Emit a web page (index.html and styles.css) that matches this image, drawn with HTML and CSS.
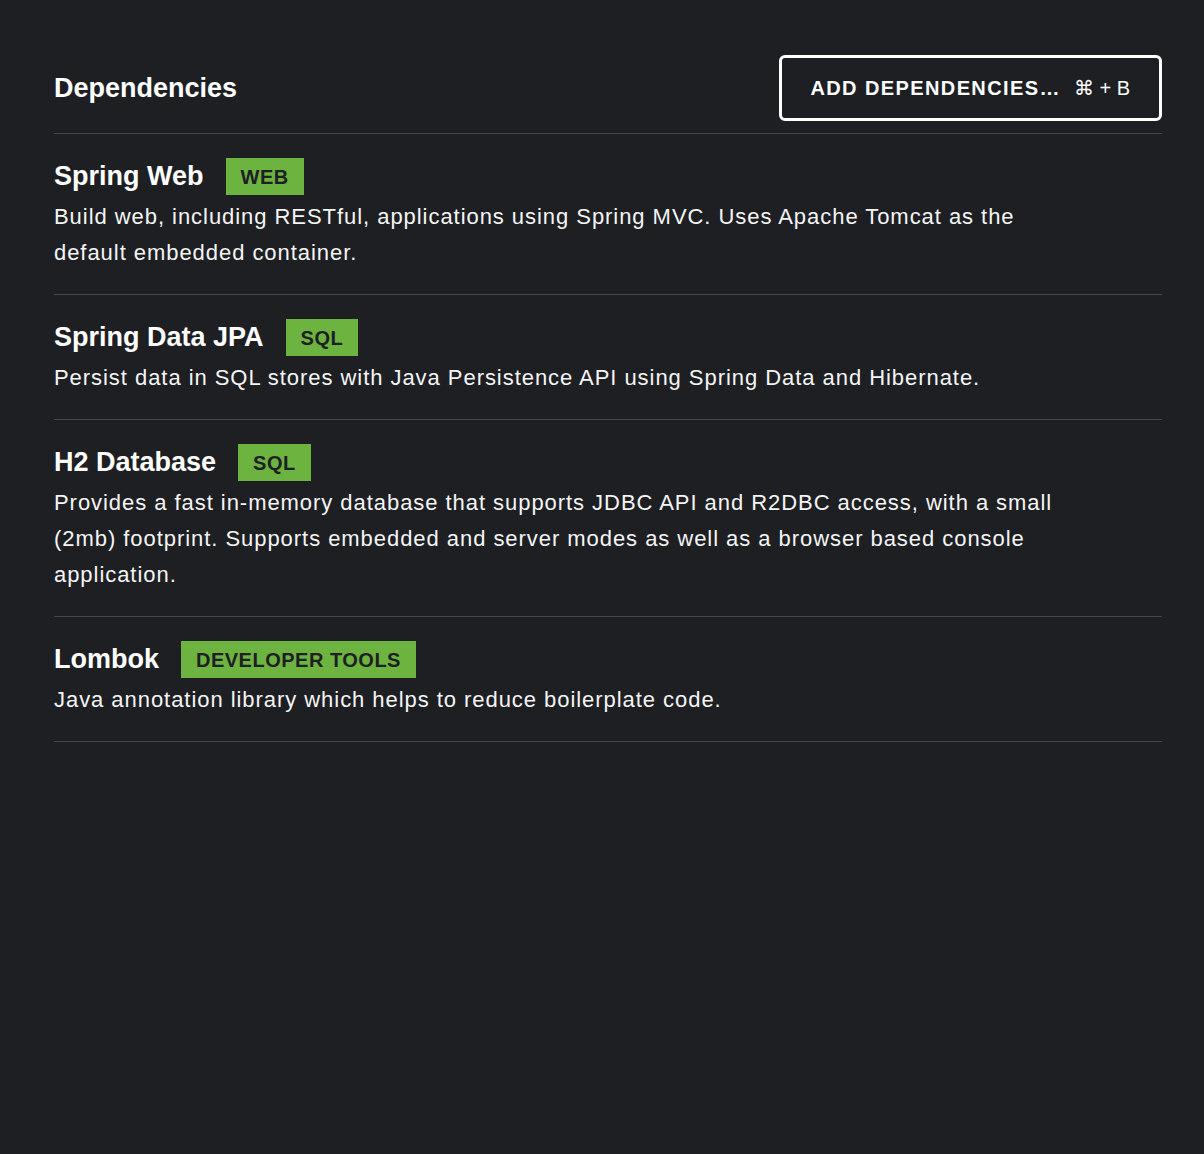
FILE: index.html
```html
<!DOCTYPE html>
<html lang="en">
<head>
    <meta charset="UTF-8">
    <meta name="viewport" content="width=device-width, initial-scale=1.0">
    <title>Dependencies</title>
    <link rel="stylesheet" href="styles.css">
</head>
<body>
    <div class="deps">
        <div class="deps-header">
            <h2 class="deps-title">Dependencies</h2>
            <button class="add-btn">ADD DEPENDENCIES&hellip; <span class="shortcut">&#8984; + B</span></button>
        </div>

        <div class="dep">
            <div class="dep-head">
                <span class="dep-name">Spring Web</span>
                <span class="tag">WEB</span>
            </div>
            <p class="dep-desc">Build web, including RESTful, applications using Spring MVC. Uses Apache Tomcat as the default embedded container.</p>
        </div>

        <div class="dep">
            <div class="dep-head">
                <span class="dep-name">Spring Data JPA</span>
                <span class="tag">SQL</span>
            </div>
            <p class="dep-desc">Persist data in SQL stores with Java Persistence API using Spring Data and Hibernate.</p>
        </div>

        <div class="dep">
            <div class="dep-head">
                <span class="dep-name">H2 Database</span>
                <span class="tag">SQL</span>
            </div>
            <p class="dep-desc">Provides a fast in-memory database that supports JDBC API and R2DBC access, with a small (2mb) footprint. Supports embedded and server modes as well as a browser based console application.</p>
        </div>

        <div class="dep">
            <div class="dep-head">
                <span class="dep-name">Lombok</span>
                <span class="tag">DEVELOPER TOOLS</span>
            </div>
            <p class="dep-desc">Java annotation library which helps to reduce boilerplate code.</p>
        </div>
    </div>
</body>
</html>
```

FILE: styles.css
```css
body {
    margin: 0;
    background-color: #1d1f23;
    color: #f5f5f5;
    font-family: "Liberation Sans", Arial, Helvetica, sans-serif;
    min-height: 100vh;
}
.deps {
    padding: 55px 42px 0 54px;
}
.deps-header {
    display: flex;
    justify-content: space-between;
    align-items: center;
    padding-bottom: 12px;
    border-bottom: 1px solid #46484c;
}
.deps-title {
    margin: 0;
    font-size: 27px;
    font-weight: bold;
    color: #fff;
}
.add-btn {
    height: 66px;
    padding: 0 29px 0 28px;
    border: 3px solid #fff;
    border-radius: 6px;
    background: transparent;
    color: #fff;
    font-family: inherit;
    font-size: 20px;
    font-weight: bold;
    letter-spacing: 1.4px;
    cursor: pointer;
}
.shortcut {
    font-weight: normal;
    letter-spacing: 0;
    margin-left: 6px;
}
.dep {
    padding: 24px 0 23px;
    border-bottom: 1px solid #46484c;
}
.dep-head {
    display: flex;
    align-items: center;
    height: 37px;
}
.dep-name {
    font-size: 27px;
    font-weight: bold;
    color: #fff;
}
.tag {
    margin-left: 22px;
    height: 37px;
    line-height: 39px;
    padding: 0 15px;
    background: #6db33f; /* spring green */
    color: #1d1f23;
    font-size: 20px;
    font-weight: bold;
    letter-spacing: 0.5px;
}
.dep-desc {
    margin: 4px 0 0;
    max-width: 1020px;
    font-size: 22px;
    line-height: 36px;
    letter-spacing: 0.95px;
}
```
